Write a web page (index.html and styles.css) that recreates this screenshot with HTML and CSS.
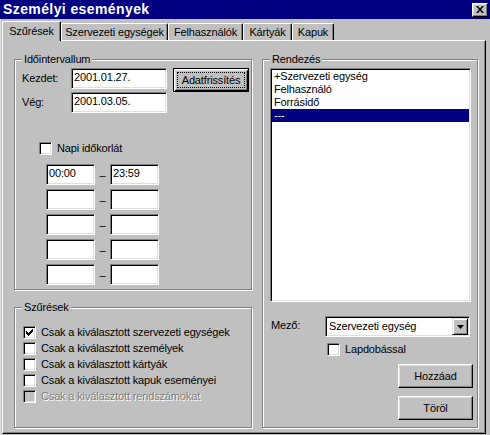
FILE: index.html
```html
<!DOCTYPE html>
<html lang="hu">
<head>
<meta charset="utf-8">
<title>Személyi események</title>
<link rel="stylesheet" href="styles.css">
</head>
<body>
<div class="window">
  <div class="titlebar">
    <span class="title">Személyi események</span>
    <span class="close"><svg width="8" height="7" viewBox="0 0 8 7"><path d="M0 0h2l2 2.4 2-2.4h2l-3 3.5 3 3.5h-2l-2-2.4-2 2.4h-2l3-3.5z" fill="#000"/></svg></span>
  </div>
  <div class="tabs">
    <div class="tab active t1">Szűrések</div>
    <div class="tab t2">Szervezeti egységek</div>
    <div class="tab t3">Felhasználók</div>
    <div class="tab t4">Kártyák</div>
    <div class="tab t5">Kapuk</div>
  </div>
  <div class="panel">
    <div class="col-left">
      <fieldset class="group g-interval">
        <legend>Időintervallum</legend>
        <div class="interval-body">
          <div class="date-row">
            <span class="date-label">Kezdet:</span>
            <div class="field date-field">2001.01.27.</div>
            <div class="btn-default"><span class="focus">Adatfrissítés</span></div>
          </div>
          <div class="date-row">
            <span class="date-label">Vég:</span>
            <div class="field date-field">2001.03.05.</div>
          </div>
          <div class="check-row napi"><span class="checkbox"></span><span>Napi időkorlát</span></div>
          <div class="time-rows">
            <div class="time-row"><div class="field time-field">00:00</div><span class="dash">–</span><div class="field time-field">23:59</div></div>
            <div class="time-row"><div class="field time-field"></div><span class="dash">–</span><div class="field time-field"></div></div>
            <div class="time-row"><div class="field time-field"></div><span class="dash">–</span><div class="field time-field"></div></div>
            <div class="time-row"><div class="field time-field"></div><span class="dash">–</span><div class="field time-field"></div></div>
            <div class="time-row"><div class="field time-field"></div><span class="dash">–</span><div class="field time-field"></div></div>
          </div>
        </div>
      </fieldset>
      <fieldset class="group g-filters">
        <legend>Szűrések</legend>
        <div class="filters-body">
          <div class="check-row"><span class="checkbox"><svg width="7" height="7" viewBox="0 0 7 7" shape-rendering="crispEdges"><path d="M6 0h1v1h-1zM5 1h2v1h-2zM0 2h1v1h-1zM4 2h3v1h-3zM0 3h2v1h-2zM3 3h3v1h-3zM0 4h5v1h-5zM1 5h3v1h-3zM2 6h1v1h-1z" fill="#000"/></svg></span><span class="lbl">Csak a kiválasztott szervezeti egységek</span></div>
          <div class="check-row"><span class="checkbox"></span><span class="lbl">Csak a kiválasztott személyek</span></div>
          <div class="check-row"><span class="checkbox"></span><span class="lbl">Csak a kiválasztott kártyák</span></div>
          <div class="check-row"><span class="checkbox"></span><span class="lbl">Csak a kiválasztott kapuk eseményei</span></div>
          <div class="check-row disabled"><span class="checkbox"></span><span class="lbl">Csak a kiválasztott rendszámokat</span></div>
        </div>
      </fieldset>
    </div>
    <fieldset class="group g-sort">
      <legend>Rendezés</legend>
      <div class="sort-body">
        <div class="listbox">
          <div class="item">+Szervezeti egység</div>
          <div class="item">Felhasználó</div>
          <div class="item">Forrásidő</div>
          <div class="item selected">---</div>
        </div>
        <div class="mezo-row">
          <span class="mezo-label">Mező:</span>
          <div class="combo">
            <span class="combo-text">Szervezeti egység</span>
            <span class="combo-btn"><svg width="7" height="4" viewBox="0 0 7 4"><path d="M0 0h7l-3.5 4z" fill="#000"/></svg></span>
          </div>
        </div>
        <div class="check-row lap"><span class="checkbox"></span><span>Lapdobással</span></div>
        <div class="btn side-btn first">Hozzáad</div>
        <div class="btn side-btn">Töröl</div>
      </div>
    </fieldset>
  </div>
</div>
</body>
</html>
```

FILE: styles.css
```css
* { box-sizing: border-box; }
html, body { margin: 0; padding: 0; }
body {
  background: #c0c0c0;
  font-family: "Liberation Sans", Arial, sans-serif;
  font-size: 11px;
  letter-spacing: -0.15px;
  color: #000;
}
.window {
  width: 490px;
  height: 435px;
  background: #c0c0c0;
  box-shadow: inset 1px 0 #dfdfdf;
  display: flex;
  flex-direction: column;
  overflow: hidden;
}
.titlebar {
  height: 19px;
  flex: none;
  background: #000080;
  display: flex;
  align-items: center;
  justify-content: space-between;
  padding: 0 2px 0 3px;
}
.title {
  color: #fff;
  font-weight: bold;
  font-size: 14px;
  letter-spacing: 0.4px;
  line-height: 19px;
}
.close {
  width: 16px;
  height: 14px;
  background: #c0c0c0;
  border: 1px solid;
  border-color: #fff #000 #000 #fff;
  box-shadow: inset -1px -1px #808080, inset 1px 1px #dfdfdf;
  display: flex;
  align-items: center;
  justify-content: center;
}
.close svg, .checkbox svg, .combo-btn svg { display: block; }

.tabs {
  height: 21px;
  flex: none;
  display: flex;
  align-items: flex-end;
  padding-left: 2px;
}
.tab {
  height: 17px;
  background: #c0c0c0;
  border-top: 1px solid #fff;
  border-left: 1px solid #fff;
  border-right: 1px solid #000;
  box-shadow: inset -1px 0 #808080;
  border-radius: 2px 2px 0 0;
  display: flex;
  align-items: center;
  justify-content: center;
  padding-bottom: 1px;
  white-space: nowrap;
}
.tab.active {
  height: 20px;
  margin-bottom: -1px;
  padding-bottom: 2px;
  position: relative;
  z-index: 1;
}
.t1 { width: 59px; }
.t2 { width: 107px; }
.t3 { width: 75px; }
.t4 { width: 49px; }
.t5 { width: 42px; }

.panel {
  flex: none;
  width: 484px;
  height: 394px;
  margin-left: 2px;
  border: 1px solid;
  border-color: #fff #000 #000 #fff;
  box-shadow: inset -1px -1px #808080;
  padding: 12px 6px 5px 11px;
  display: flex;
  gap: 10px;
}
.col-left {
  width: 238px;
  flex: none;
  display: flex;
  flex-direction: column;
  gap: 11px;
}
.group {
  margin: 0;
  padding: 0;
  min-width: 0;
  border: 1px solid #808080;
  box-shadow: inset 1px 1px #fff, 1px 1px #fff;
}
.group legend {
  margin-left: 7px;
  padding: 0 2px;
  line-height: 13px;
  background: #c0c0c0;
}
.g-interval { height: 237px; flex: none; }
.g-filters { height: 127px; flex: none; }
.g-sort { width: 216px; height: 375px; flex: none; }

.interval-body { padding: 2px 0 0 7px; }
.date-row { display: flex; align-items: flex-start; }
.date-label { width: 49px; line-height: 21px; }

.field {
  height: 21px;
  background: #fff;
  border: 1px solid;
  border-color: #808080 #fff #fff #808080;
  box-shadow: inset 1px 1px #000, inset -1px -1px #dfdfdf;
  padding: 2px 2px 0 2px;
  line-height: 13px;
  white-space: nowrap;
}
.date-field { width: 96px; }
.time-field { width: 49px; padding-left: 2px; }

.btn {
  background: #c0c0c0;
  border: 1px solid;
  border-color: #fff #000 #000 #fff;
  box-shadow: inset -1px -1px #808080, inset 1px 1px #dfdfdf;
  display: flex;
  align-items: center;
  justify-content: center;
}
.btn-default {
  width: 76px;
  height: 24px;
  margin-left: 6px;
  border: 1px solid #000;
  box-shadow: inset 1px 1px #fff, inset -1px -1px #000, inset 2px 2px #dfdfdf, inset -2px -2px #808080;
  padding: 3px;
  display: flex;
}
.focus {
  flex: 1;
  border: 1px dotted #000;
  display: flex;
  align-items: center;
  justify-content: center;
  white-space: nowrap;
}

.check-row {
  display: flex;
  align-items: center;
  gap: 5px;
  white-space: nowrap;
}
.checkbox {
  width: 13px;
  height: 13px;
  flex: none;
  background: #fff;
  border: 1px solid;
  border-color: #808080 #fff #fff #808080;
  box-shadow: inset 1px 1px #000, inset -1px -1px #dfdfdf;
  padding: 2px;
}
.napi { margin-top: 29px; padding-left: 17px; height: 13px; line-height: 13px; }

.time-rows {
  margin-top: 9px;
  padding-left: 24px;
  display: flex;
  flex-direction: column;
  gap: 3px;
}
.time-row { display: flex; }
.dash { width: 15px; text-align: center; line-height: 21px; padding-top: 1px; }

.filters-body { padding: 10px 0 0 8px; }
.filters-body .check-row { height: 16px; align-items: flex-start; }
.filters-body .checkbox { margin-top: 2px; }
.filters-body .lbl { line-height: 16px; }
.check-row.disabled .checkbox { background: #c0c0c0; }
.check-row.disabled .lbl { color: #808080; text-shadow: 1px 1px 0 #fff; }

.sort-body {
  padding: 2px 4px 0 7px;
  display: flex;
  flex-direction: column;
}
.listbox {
  width: 201px;
  height: 234px;
  flex: none;
  background: #fff;
  border: 1px solid;
  border-color: #808080 #fff #fff #808080;
  box-shadow: inset 1px 1px #000, inset -1px -1px #dfdfdf;
  padding: 1px;
}
.item {
  height: 13px;
  line-height: 13px;
  padding-left: 2px;
  white-space: nowrap;
}
.item.selected { background: #000080; color: #fff; }

.mezo-row { display: flex; margin-top: 14px; }
.mezo-label { width: 55px; padding-left: 1px; line-height: 19px; }
.combo {
  width: 145px;
  height: 21px;
  background: #fff;
  border: 1px solid;
  border-color: #808080 #fff #fff #808080;
  box-shadow: inset 1px 1px #000, inset -1px -1px #dfdfdf;
  padding: 1px;
  display: flex;
}
.combo-text { flex: 1; line-height: 17px; padding-left: 2px; white-space: nowrap; }
.combo-btn {
  width: 16px;
  height: 17px;
  background: #c0c0c0;
  border: 1px solid;
  border-color: #dfdfdf #000 #000 #dfdfdf;
  box-shadow: inset 1px 1px #fff, inset -1px -1px #808080;
  display: flex;
  align-items: center;
  justify-content: center;
}
.lap { margin-top: 6px; padding-left: 57px; height: 13px; line-height: 13px; }
.side-btn {
  align-self: flex-end;
  width: 75px;
  height: 24px;
  margin-top: 8px;
}
```
